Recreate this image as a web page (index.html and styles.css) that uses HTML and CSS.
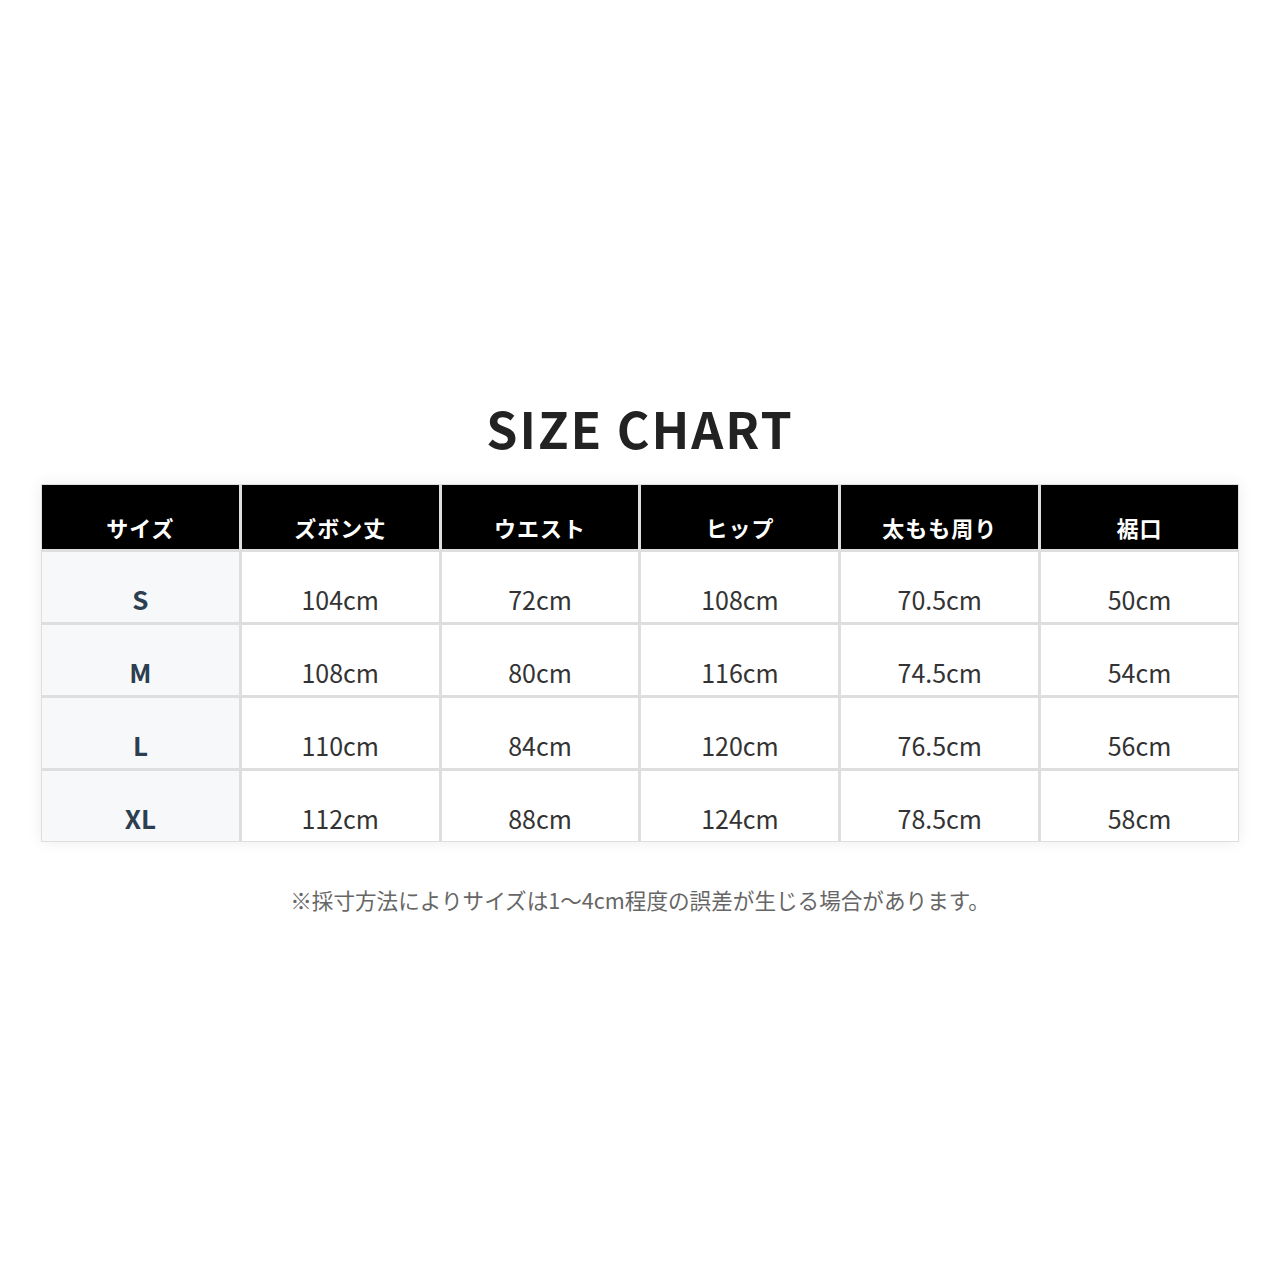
FILE: index.html
```html
<!DOCTYPE html>
<html lang="ja">
<head>
<meta charset="utf-8">
<title>SIZE CHART</title>
<link rel="stylesheet" href="styles.css">
</head>
<body>
<main class="page">
  <h1 class="title">SIZE CHART</h1>
  <div class="chart">
    <div class="cell head">サイズ</div>
    <div class="cell head">ズボン丈</div>
    <div class="cell head">ウエスト</div>
    <div class="cell head">ヒップ</div>
    <div class="cell head">太もも周り</div>
    <div class="cell head">裾口</div>

    <div class="cell size">S</div>
    <div class="cell">104cm</div>
    <div class="cell">72cm</div>
    <div class="cell">108cm</div>
    <div class="cell">70.5cm</div>
    <div class="cell">50cm</div>

    <div class="cell size">M</div>
    <div class="cell">108cm</div>
    <div class="cell">80cm</div>
    <div class="cell">116cm</div>
    <div class="cell">74.5cm</div>
    <div class="cell">54cm</div>

    <div class="cell size">L</div>
    <div class="cell">110cm</div>
    <div class="cell">84cm</div>
    <div class="cell">120cm</div>
    <div class="cell">76.5cm</div>
    <div class="cell">56cm</div>

    <div class="cell size">XL</div>
    <div class="cell">112cm</div>
    <div class="cell">88cm</div>
    <div class="cell">124cm</div>
    <div class="cell">78.5cm</div>
    <div class="cell">58cm</div>
  </div>
  <p class="note">※採寸方法によりサイズは1～4cm程度の誤差が生じる場合があります。</p>
</main>
</body>
</html>
```
FILE: styles.css
```css
html, body {
  margin: 0;
  padding: 0;
  background: #ffffff;
}
body {
  font-family: "Noto Sans CJK JP", "Noto Sans", sans-serif;
  color: #333333;
}
.page {
  width: 1280px;
  height: 1280px;
  display: flex;
  flex-direction: column;
  align-items: center;
  padding-top: 397px;
  box-sizing: border-box;
}
.title {
  margin: 0;
  font-size: 50px;
  line-height: 60px;
  font-weight: 700;
  letter-spacing: 2px;
  color: #222222;
}
.chart {
  margin-top: 27px;
  width: 1198px;
  box-sizing: border-box;
  display: grid;
  grid-template-columns: repeat(6, 1fr);
  grid-template-rows: 64px repeat(4, 70px);
  gap: 3px;
  padding: 1px;
  background: #dedede;
  box-shadow: 0 0 14px rgba(0, 0, 0, 0.08);
}
.cell {
  background: #ffffff;
  display: flex;
  align-items: flex-end;
  justify-content: center;
  font-size: 25px;
  line-height: 34px;
  padding-bottom: 6px;
  color: #333333;
}
.head {
  background: #000000;
  color: #ffffff;
  font-weight: 700;
  font-size: 22px;
  line-height: 30px;
  letter-spacing: 1px;
  padding-bottom: 7px;
}
.size {
  background: #f6f8fa;
  font-weight: 700;
  font-size: 26px;
  color: #2c3e50;
}
.note {
  margin: 43px 0 0;
  font-size: 21.6px;
  line-height: 30px;
  color: #666666;
}
```
